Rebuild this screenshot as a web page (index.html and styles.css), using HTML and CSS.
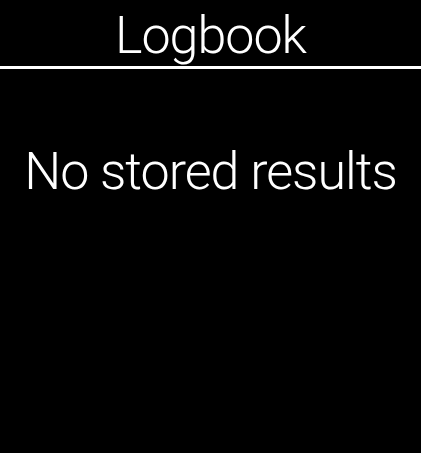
FILE: index.html
```html
<!DOCTYPE html>
<html>
<head>
<meta charset="utf-8">
<link rel="stylesheet" href="styles.css">
</head>
<body>
<div class="screen">
  <header class="title-bar">
    <h1 class="title">Logbook</h1>
  </header>
  <main class="content">
    <p class="message">No stored results</p>
  </main>
</div>
</body>
</html>
```

FILE: styles.css
```css
html, body {
  margin: 0;
  padding: 0;
  background: #000;
}
.screen {
  width: 421px;
  height: 453px;
  background: #000;
  color: #fff;
  font-family: Roboto, "DejaVu Sans Condensed", sans-serif;
  font-weight: 300;
  overflow: hidden;
}
.title-bar {
  height: 66px;
  box-sizing: content-box;
  border-bottom: 3px solid #fff;
  display: flex;
  justify-content: center;
  align-items: flex-start;
}
.title {
  margin: 10px 0 0;
  font-size: 52px;
  line-height: 52px;
  font-weight: 300;
  letter-spacing: -1px;
}
.content {
  padding-top: 77px;
  text-align: center;
}
.message {
  margin: 0;
  font-size: 52px;
  line-height: 52px;
  white-space: nowrap;
  letter-spacing: -1px;
}
```
